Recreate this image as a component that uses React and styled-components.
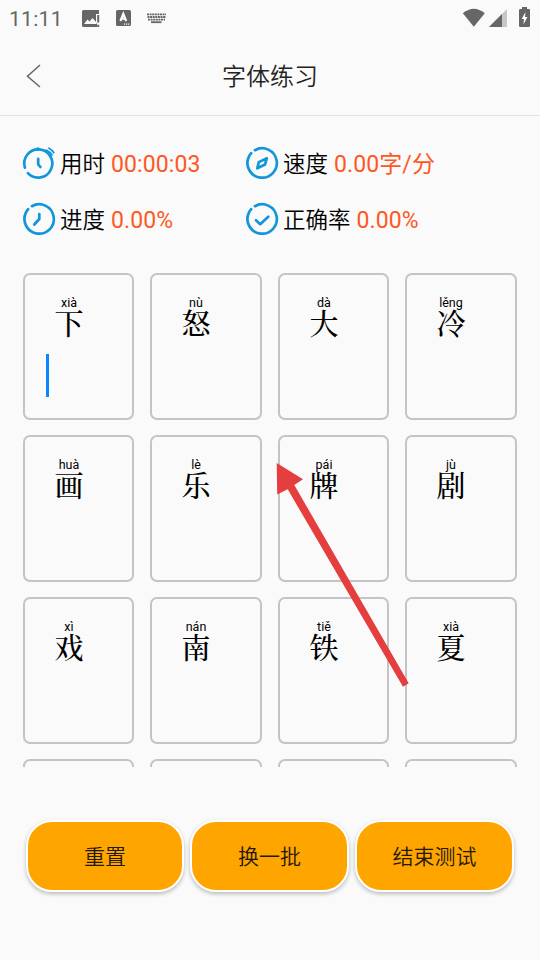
import React from "react";
import styled, { createGlobalStyle } from "styled-components";

const GlobalStyle = createGlobalStyle`
  * { box-sizing: border-box; }
  body {
    margin: 0;
    background: #fafafa;
    font-family: Roboto, "Noto Sans CJK SC", sans-serif;
    color: #000;
  }
`;

const Screen = styled.div`
  position: relative;
  width: 540px;
  height: 960px;
  overflow: hidden;
  display: flex;
  flex-direction: column;
  background: #fafafa;
`;

const StatusBar = styled.div`
  height: 36px;
  flex: none;
  display: flex;
  align-items: center;
  justify-content: space-between;
  padding: 0 9px;
  color: #666;
`;

const StatusGroup = styled.div`
  display: flex;
  align-items: center;
`;

const Clock = styled.span`
  width: 72px;
  font-size: 21px;
  line-height: 36px;
  letter-spacing: 0.3px;
  padding-top: 2px;
`;

const Header = styled.header`
  height: 80px;
  flex: none;
  display: grid;
  grid-template-columns: 60px 1fr 60px;
  align-items: center;
  border-bottom: 1px solid #e4e4e4;
`;

const BackButton = styled.button`
  border: 0;
  background: none;
  padding: 0 0 0 26px;
  height: 24px;
  display: flex;
`;

const Title = styled.h1`
  margin: 0;
  padding-top: 2px;
  text-align: center;
  font-size: 24px;
  line-height: 36px;
  font-weight: 350;
  color: #222;
`;

const Stats = styled.section`
  flex: none;
  display: grid;
  grid-template-columns: 223px 1fr;
  grid-auto-rows: 56px;
  padding: 19px 23px 0;
  height: 157px;
`;

const Stat = styled.div`
  display: flex;
  align-items: center;
  font-size: 22.5px;
  line-height: 34px;
  font-weight: 350;
  white-space: nowrap;
`;

const StatIcon = styled.svg`
  width: 32px;
  height: 34px;
  overflow: visible;
  margin-right: 5px;
  flex: none;
  fill: none;
  stroke: #1296db;
  stroke-width: 2.7;
  stroke-linecap: round;
  stroke-linejoin: round;
`;

const StatLabel = styled.span`
  padding-top: 2px;
`;

const StatValue = styled.span`
  margin-left: 6px;
  padding-top: 3px;
  font-size: 23px;
  font-weight: 370;
  letter-spacing: 0.1px;
  color: #ff5722;
`;

const CardViewport = styled.main`
  height: 494px;
  flex: none;
  overflow: hidden;
  padding: 0 23px;
`;

const CardGrid = styled.div`
  display: grid;
  grid-template-columns: 111px 112px 111px 112px;
  grid-auto-rows: 147px;
  gap: 15px 16px;
`;

const Card = styled.div`
  border: 2px solid #c4c4c4;
  border-radius: 7px;
  padding: 21px 0 0 21px;
`;

const Glyph = styled.div`
  width: 46px;
  display: flex;
  flex-direction: column;
  align-items: center;
`;

const Pinyin = styled.span`
  height: 12px;
  font-size: 12.5px;
  line-height: 14px;
`;

const Hanzi = styled.span`
  height: 46px;
  font-family: KaiTi, STKaiti, "AR PL UKai CN", "Noto Serif CJK SC", "Noto Sans CJK SC", serif;
  font-size: 29px;
  line-height: 29px;
  font-weight: 500;
`;

const Caret = styled.div`
  width: 3px;
  height: 43px;
  background: #0a84ff;
`;

const Actions = styled.footer`
  display: grid;
  grid-template-columns: 158px 159px 159px;
  gap: 6px;
  margin: 53px 26px 0;
`;

const ActionButton = styled.button`
  height: 72px;
  border: 2px solid #fff;
  border-radius: 26px;
  background: #ffa500;
  box-shadow: 0 2px 4px rgba(0, 0, 0, 0.26);
  font-family: inherit;
  font-size: 21px;
  line-height: 30px;
  font-weight: 350;
  color: #21180a;
  padding: 2px 0 0;
`;

const Pointer = styled.svg`
  position: absolute;
  left: 270px;
  top: 455px;
  width: 150px;
  height: 240px;
  pointer-events: none;
`;

const ring = "M2.9 10.6A14.7 14.7 0 0 1 5.2 7.2M8.9 4.2A14.7 14.7 0 1 1 2.9 10.6";

const stats = [
  {
    label: "用时",
    value: "00:00:03",
    icon: (
      <>
        <path d="M1.9 21.6A14 14 0 1 1 28 23.2A14 14 0 0 1 4.9 27.2" />
        <path d="M15 2.5V3.7M15.2 12.8V18.3L17.4 21" />
        <path d="M23.6 4.2Q27 5.8 29 9M26 2.2Q29 3.8 30.8 6.7" strokeWidth="1.8" />
      </>
    ),
  },
  {
    label: "速度",
    value: "0.00字/分",
    icon: (
      <>
        <path d={ring} />
        <path d="M20.8 12.3L19 18.5L11.3 22.3L12.8 16.1Z" />
      </>
    ),
  },
  {
    label: "进度",
    value: "0.00%",
    icon: (
      <>
        <path d={ring} />
        <path d="M16.3 12V17L11.3 22.5" />
      </>
    ),
  },
  {
    label: "正确率",
    value: "0.00%",
    icon: (
      <>
        <path d={ring} />
        <path d="M10 18.2L14.2 22.2L22.3 14.7" />
      </>
    ),
  },
];

const cards = [
  ["xià", "下"],
  ["nù", "怒"],
  ["dà", "大"],
  ["lěng", "冷"],
  ["huà", "画"],
  ["lè", "乐"],
  ["pái", "牌"],
  ["jù", "剧"],
  ["xì", "戏"],
  ["nán", "南"],
  ["tiě", "铁"],
  ["xià", "夏"],
];

const NotificationIcons = () => (
  <svg width="86" height="20" viewBox="0 0 86 20" fill="#666">
    <path d="M2.5 2H18V6H15V15.5H16V19H2.5Q1 19 1 17.5V3.5Q1 2 2.5 2Z" />
    <path d="M3 16L6.5 11.5L8.5 13.5L11.5 10L15 14V16Z" fill="#fafafa" />
    <path d="M16.2 7H18.2V14.5H16.2ZM16.2 16.8H18.2V19H16.2Z" />
    <rect x="35" y="2" width="15" height="16" rx="1.5" />
    <path d="M39.4 13L42.3 5.8L45.2 13M40.6 10.8H44" stroke="#fff" strokeWidth="2.1" fill="none" />
    <path d="M43 16.2H48.5" stroke="#fff" strokeWidth="1.2" strokeDasharray="1.2 .9" />
    <path d="M66 6.4H85M66.5 9H85M67 11.6H84" stroke="#666" strokeWidth="1.8" strokeDasharray="2 .6" />
    <path d="M70 14.2H80.5" stroke="#666" strokeWidth="1.8" />
  </svg>
);

const SystemIcons = () => (
  <svg width="69" height="22" viewBox="0 0 69 22" fill="#666">
    <path d="M.8 6.2Q11.8-2.8 22.8 6.2L11.8 19.8Z" />
    <path d="M27 20L45 2V20Z" opacity=".35" />
    <path d="M27 20L40 7V20Z" />
    <path d="M60 0H65V2H67Q68 2 68 3.3V18.7Q68 20 67 20H58.3Q57 20 57 18.7V3.3Q57 2 58.3 2H60Z" />
    <path d="M63.5 5L59.7 12H62L61.4 17.5L65.5 10H63Z" fill="#fff" />
  </svg>
);

export default function App() {
  return (
    <>
      <GlobalStyle />
      <Screen>
        <StatusBar>
          <StatusGroup>
            <Clock>11:11</Clock>
            <NotificationIcons />
          </StatusGroup>
          <SystemIcons />
        </StatusBar>
        <Header>
          <BackButton aria-label="返回">
            <svg width="16" height="24" viewBox="0 0 16 24" fill="none" stroke="#666" strokeWidth="1.5">
              <path d="M14 1L1.5 12.2L14 23" />
            </svg>
          </BackButton>
          <Title>字体练习</Title>
        </Header>
        <Stats>
          {stats.map((s) => (
            <Stat key={s.label}>
              <StatIcon viewBox="0 0 32 34">{s.icon}</StatIcon>
              <StatLabel>{s.label}</StatLabel>
              <StatValue>{s.value}</StatValue>
            </Stat>
          ))}
        </Stats>
        <CardViewport>
          <CardGrid>
            {cards.map(([pinyin, hanzi], i) => (
              <Card key={hanzi}>
                <Glyph>
                  <Pinyin>{pinyin}</Pinyin>
                  <Hanzi>{hanzi}</Hanzi>
                </Glyph>
                {i === 0 && <Caret />}
              </Card>
            ))}
            <Card />
            <Card />
            <Card />
            <Card />
          </CardGrid>
        </CardViewport>
        <Actions>
          <ActionButton>重置</ActionButton>
          <ActionButton>换一批</ActionButton>
          <ActionButton>结束测试</ActionButton>
        </Actions>
        <Pointer viewBox="270 455 150 240">
          <path
            d="M276.7 463L303 479.3L294.3 485L408.7 683.3L403 686.7L287.7 489.3L277.2 494.6Z"
            fill="#e53e3e"
          />
        </Pointer>
      </Screen>
    </>
  );
}
